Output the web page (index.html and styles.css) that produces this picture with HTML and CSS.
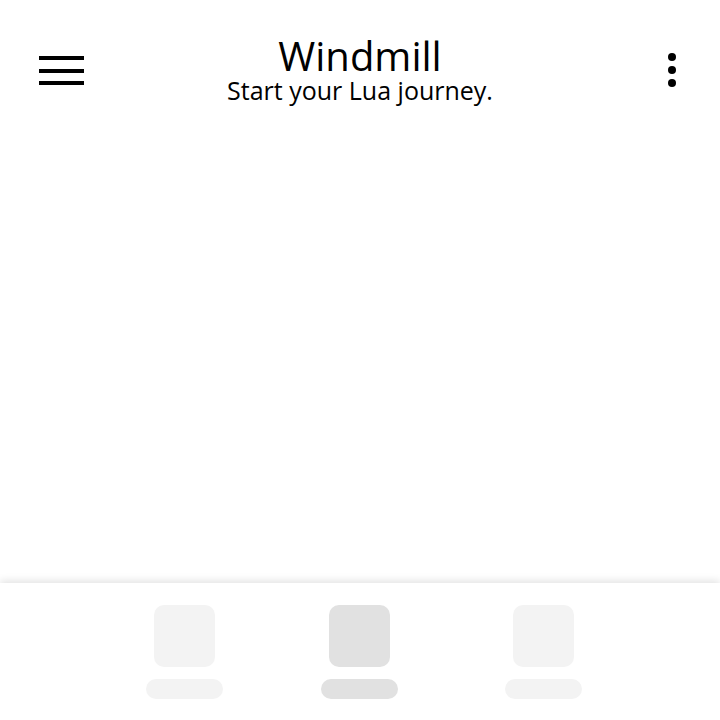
FILE: index.html
```html
<!DOCTYPE html>
<html>
<head>
<meta charset="utf-8">
<link rel="stylesheet" href="styles.css">
</head>
<body>
<div class="app">
  <header class="topbar">
    <button class="icon-btn menu" aria-label="Menu">
      <svg width="45" height="30" viewBox="0 0 45 30"><rect x="0" y="0" width="45" height="4" fill="#000"/><rect x="0" y="13" width="45" height="4" fill="#000"/><rect x="0" y="25" width="45" height="4" fill="#000"/></svg>
    </button>
    <div class="titles">
      <div class="title">Windmill</div>
      <div class="subtitle">Start your Lua journey.</div>
    </div>
    <button class="icon-btn more" aria-label="More">
      <svg width="10" height="36" viewBox="0 0 10 36"><circle cx="5" cy="5" r="4" fill="#000"/><circle cx="5" cy="18" r="4" fill="#000"/><circle cx="5" cy="31" r="4" fill="#000"/></svg>
    </button>
  </header>
  <main class="content"></main>
  <nav class="bottomnav">
    <div class="nav-item"><div class="nav-icon"></div><div class="nav-label"></div></div>
    <div class="nav-item active"><div class="nav-icon"></div><div class="nav-label"></div></div>
    <div class="nav-item third"><div class="nav-icon"></div><div class="nav-label"></div></div>
  </nav>
</div>
</body>
</html>
```
FILE: styles.css
```css
html, body {
  margin: 0;
  padding: 0;
  background: #fff;
}
body {
  font-family: "Open Sans", "Noto Sans", sans-serif;
  color: #000;
}
.app {
  width: 720px;
  height: 720px;
  display: flex;
  flex-direction: column;
  overflow: hidden;
}
.topbar {
  display: grid;
  grid-template-columns: 1fr auto 1fr;
  align-items: start;
  padding: 0 39px;
  height: 130px;
}
.icon-btn {
  border: 0;
  background: none;
  padding: 0;
  margin: 0;
  display: block;
}
.icon-btn svg { display: block; }
.menu { margin-top: 56px; justify-self: start; }
.more { margin-top: 52px; margin-right: 4px; justify-self: end; }
.titles {
  text-align: center;
  padding-top: 37px;
}
.title {
  font-size: 40px;
  line-height: 38px;
}
.subtitle {
  font-size: 25px;
  line-height: 27px;
  margin-top: 2px;
}
.content {
  flex: 1;
}
.bottomnav {
  height: 137px;
  box-shadow: 0 -2px 8px rgba(0,0,0,0.12);
  background: #fff;
  display: flex;
  padding-left: 146px;
  gap: 98px;
  box-sizing: border-box;
  padding-top: 22px;
}
.nav-item {
  width: 77px;
  display: flex;
  flex-direction: column;
  align-items: center;
  gap: 12px;
}
.nav-item.third { margin-left: 9px; }
.nav-icon {
  width: 61px;
  height: 62px;
  border-radius: 10px;
  background: #f3f3f3;
}
.nav-label {
  width: 77px;
  height: 20px;
  border-radius: 10px;
  background: #f3f3f3;
}
.nav-item.active .nav-icon,
.nav-item.active .nav-label {
  background: #e1e1e1;
}
```
